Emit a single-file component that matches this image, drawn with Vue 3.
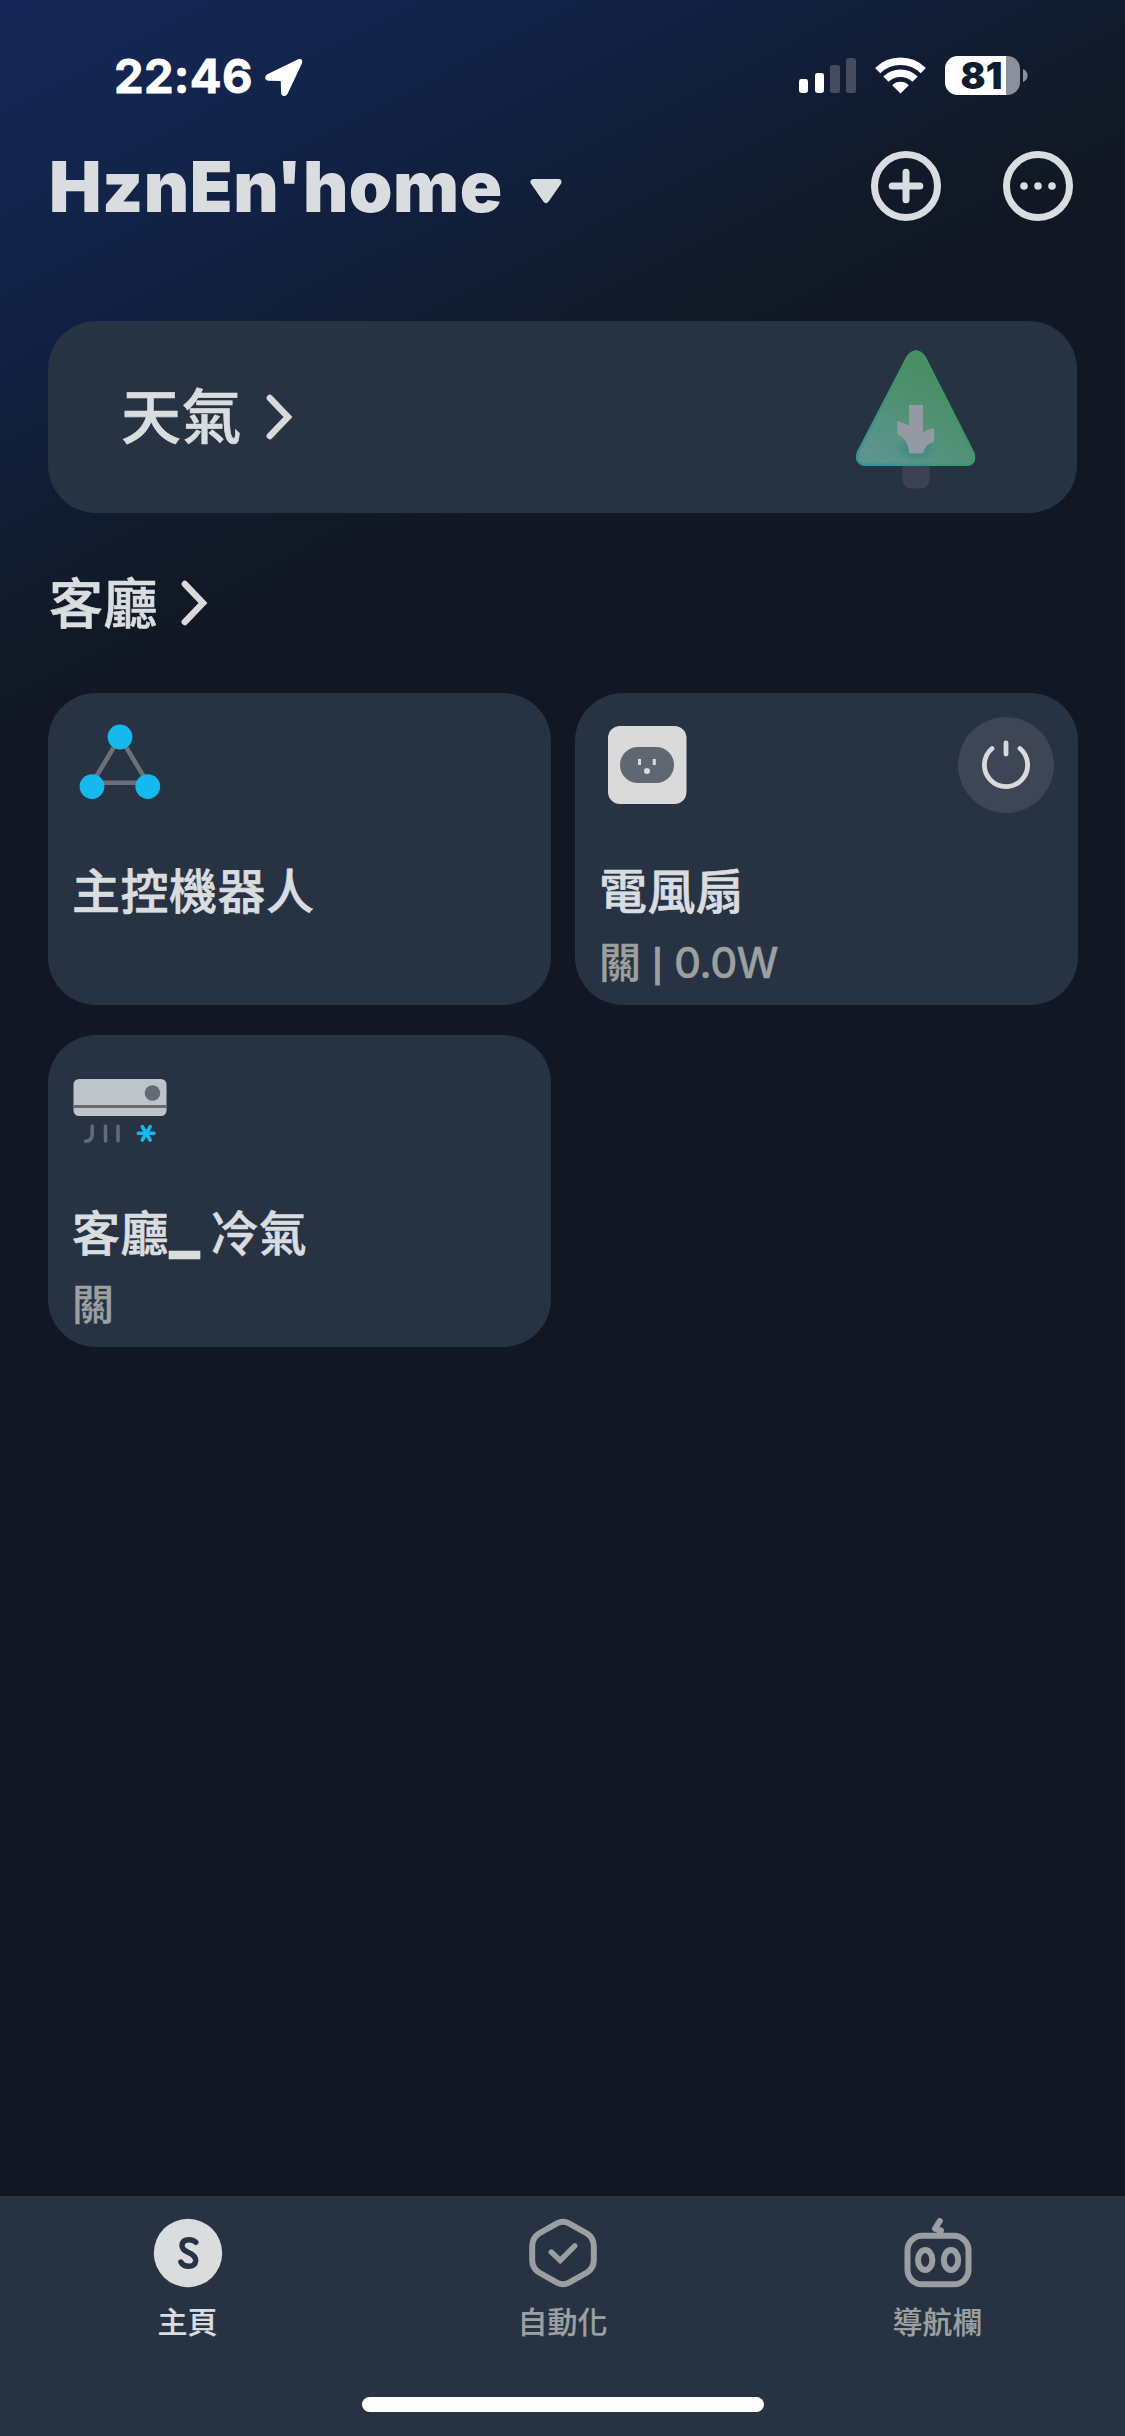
<script setup>
const devices = [
  { icon: 'hub', name: ['主控機器人'], status: '', reading: '', power: false },
  { icon: 'outlet', name: ['電風扇'], status: '關', reading: '0.0W', power: true },
  { icon: 'aircon', name: ['客廳', '_', ' 冷氣'], status: '關', reading: '', power: false },
]
const tabs = [
  { icon: 'home', label: '主頁', active: true },
  { icon: 'auto', label: '自動化', active: false },
  { icon: 'robot', label: '導航欄', active: false },
]
</script>

<template>
  <div class="screen">
    <div class="status-bar">
      <div class="clock">
        <span class="time">22:46</span>
        <svg class="location" width="40" height="40" viewBox="0 0 40 40">
          <path d="M3.3 17.2 L34.2 2.2 Q38.8 .8 38.2 5.8 L23.6 36.7 Q22 39.4 19.4 38.9 Q17 38.3 17 35.6 L16.8 24 L4.8 23.8 Q1.6 23.6 1.2 21 Q1 18.4 3.3 17.2 Z" fill="#fff" />
        </svg>
      </div>
      <div class="indicators">
        <svg width="57" height="36" viewBox="0 0 57 36">
          <rect x="0" y="21" width="9" height="14" rx="2.4" fill="#fff" />
          <rect x="16" y="15" width="9" height="20" rx="2.4" fill="#fff" />
          <rect x="31" y="7" width="10" height="28" rx="2.6" fill="#454c5e" />
          <rect x="47" y="0" width="10" height="35" rx="2.6" fill="#454c5e" />
        </svg>
        <svg class="wifi" width="51" height="37" viewBox="0 0 51 37">
          <g fill="none" stroke="#fff" stroke-width="7.4">
            <path d="M2.7 13.6 A32.5 32.5 0 0 1 48.3 13.6" />
            <path d="M10.9 22.2 A20.8 20.8 0 0 1 40.1 22.2" />
          </g>
          <path d="M25.5 36.5 L17.2 28.2 A11.8 11.8 0 0 1 33.8 28.2 Z" fill="#fff" />
        </svg>
        <div class="battery"><span>81</span></div>
        <svg class="nub" width="5" height="13" viewBox="0 0 5 13"><path d="M0 0 Q4.6 2.2 4.6 6.5 T0 13 Z" fill="#8b909c" /></svg>
      </div>
    </div>

    <header class="header">
      <h1>HznEn'home</h1>
      <svg class="caret" width="34" height="26" viewBox="0 0 34 26"><path d="M4.5 4 H29.5 L17 22 Z" fill="#dadde0" stroke="#dadde0" stroke-width="6" stroke-linejoin="round" /></svg>
      <div class="actions">
        <svg width="70" height="70" viewBox="0 0 70 70" fill="none" stroke="#dadde0" stroke-width="7" stroke-linecap="round">
          <circle cx="35" cy="35" r="31.5" /><path d="M21.2 35 H48.8 M35 21.2 V48.8" />
        </svg>
        <svg width="70" height="70" viewBox="0 0 70 70" fill="#dadde0">
          <circle cx="35" cy="35" r="31.5" fill="none" stroke="#dadde0" stroke-width="7" />
          <circle cx="21" cy="35" r="3.8" /><circle cx="35" cy="35" r="3.8" /><circle cx="49" cy="35" r="3.8" />
        </svg>
      </div>
    </header>

    <section class="weather">
      <span class="weather-label">天氣</span>
      <svg class="chevron" width="27" height="46" viewBox="0 0 27 46"><path d="M3.8 4 L22 23 L3.8 42" /></svg>
      <svg class="tree" width="122" height="140" viewBox="0 0 122 140">
        <defs>
          <linearGradient id="leaf" x1=".15" y1=".9" x2=".6" y2=".2">
            <stop offset="0" stop-color="#5c948e" /><stop offset=".35" stop-color="#54937f" /><stop offset="1" stop-color="#4a8e64" />
          </linearGradient>
          <linearGradient id="leafEdge" x1=".1" y1=".9" x2=".7" y2=".4">
            <stop offset="0" stop-color="#3a9299" /><stop offset="1" stop-color="#42965f" />
          </linearGradient>
          <radialGradient id="shade"><stop offset="0" stop-color="#2e8089" stop-opacity=".8" /><stop offset="1" stop-color="#2e8089" stop-opacity="0" /></radialGradient>
        </defs>
        <path d="M47.500 100 H74.500 V129 Q74.500 138.500 65 138.500 H57 Q47.500 138.500 47.500 129 Z" fill="#3c4253" />
        <path d="M51.500 6.500 Q61 -6 70.500 6.500 L119 102 Q123.500 114.500 112 116 H10 Q-1.500 114.500 2 102 Z" fill="url(#leaf)" />
        <path d="M52.500 7.500 Q61 -4 69.500 7.500 L118 102.500 Q121.500 113.500 112 114.800 H10 Q.200 113.500 3 102.500 Z" fill="none" stroke="url(#leafEdge)" stroke-width="2.400" />
        <ellipse cx="60" cy="99" rx="22" ry="13" fill="url(#shade)" />
        <path d="M54 55 H68 V82.300 Q73.500 78.800 79.100 78 V92 Q70.500 93.500 68 103.500 H54 Q53 88 42.100 84.500 V71.300 Q48.500 72.300 54 75.800 Z" fill="#9499a4" />
      </svg>
    </section>

    <div class="room">
      <h2>客廳</h2>
      <svg class="chevron" width="27" height="46" viewBox="0 0 27 46"><path d="M3.8 4 L22 23 L3.8 42" /></svg>
    </div>

    <main class="grid">
      <article v-for="d in devices" :key="d.icon" class="card">
        <div class="card-top">
          <svg v-if="d.icon === 'hub'" width="96" height="96" viewBox="0 0 96 96">
            <path d="M48 20 L20.500 65.800 H75.500 Z" fill="none" stroke="#6b6f77" stroke-width="4.600" />
            <g fill="#15b9ee"><circle cx="48" cy="20" r="12.400" /><circle cx="20" cy="69.600" r="12.400" /><circle cx="75.800" cy="69.600" r="12.400" /></g>
          </svg>
          <svg v-else-if="d.icon === 'outlet'" width="96" height="96" viewBox="0 0 96 96">
            <rect x="9" y="9" width="78.500" height="78" rx="12" fill="#dadada" />
            <rect x="21" y="30" width="54" height="36" rx="18" fill="#606770" />
            <path d="M39 42 h3 v6 h-3z M53.800 42 h3 v6 h-3z" fill="#dadada" /><circle cx="48" cy="54" r="3" fill="#dadada" />
          </svg>
          <svg v-else width="96" height="96" viewBox="0 0 96 96">
            <rect x="1.500" y="20" width="93" height="37" rx="5.500" fill="#bfc4c9" />
            <path d="M1.500 47.500 H94.500" stroke="#656a74" stroke-width="3" />
            <circle cx="80.500" cy="34" r="7.800" fill="#656a74" />
            <g fill="none" stroke-linecap="round">
              <path d="M20.200 67 V75 Q20.200 82 13.500 82.200 M33.500 67 V82 M46 67 V82" stroke="#656a74" stroke-width="3.500" />
              <path d="M66.300 74.300 H82 M70.300 67.600 L78.200 81 M78.200 67.600 L70.300 81" stroke="#15b9ee" stroke-width="3.600" />
            </g>
          </svg>
          <button v-if="d.power" class="power" type="button" aria-label="power">
            <svg width="96" height="96" viewBox="0 0 96 96" fill="none" stroke="#dadada" stroke-width="4.800" stroke-linecap="round">
              <path d="M34 31.500 A21.600 21.600 0 1 0 62 31.500" /><path d="M48 26 V37" />
            </svg>
          </button>
        </div>
        <h3><span v-for="part in d.name" :key="part" :class="{ underscore: part === '_' }">{{ part }}</span></h3>
        <p>{{ d.status }}<template v-if="d.reading"><span class="divider">|</span><span class="reading">{{ d.reading }}</span></template></p>
      </article>
    </main>

    <nav class="tabbar">
      <div class="tabs">
        <div v-for="t in tabs" :key="t.icon" class="tab" :class="{ active: t.active }">
          <svg v-if="t.icon === 'home'" width="72" height="72" viewBox="0 0 72 72">
            <circle cx="36" cy="36" r="34.200" fill="#dadcde" />
            <path d="M43.800 25.300 Q41.500 22.700 37 22.700 Q30.300 22.700 30 28.500 Q30 32.500 35.500 35 Q44 38.500 43.700 44 Q43 49.300 36.500 49.300 Q31 49.300 28.900 45" fill="none" stroke="#273242" stroke-width="5.400" stroke-linecap="round" />
          </svg>
          <svg v-else-if="t.icon === 'auto'" width="72" height="72" viewBox="0 0 72 72" fill="none" stroke="#9c9fa1" stroke-linecap="round" stroke-linejoin="round">
            <path d="M30.500 6.200 Q36 3.300 41.500 6.200 L60 16.500 Q66.800 21 66.800 29 V43 Q66.800 51 60 55.500 L41.500 65.800 Q36 68.700 30.500 65.800 L12 55.500 Q5.200 51 5.200 43 V29 Q5.200 21 12 16.500 Z" stroke-width="6" />
            <path d="M24.300 35 L33.200 43.500 L47.800 28.800" stroke-width="5.400" stroke-linejoin="miter" />
          </svg>
          <svg v-else width="72" height="72" viewBox="0 0 72 72" fill="none" stroke="#9c9fa1" stroke-width="6" stroke-linecap="round">
            <rect x="5.500" y="18.800" width="61" height="48.500" rx="14.500" />
            <ellipse cx="23.200" cy="43" rx="7.200" ry="10" /><ellipse cx="49" cy="43" rx="7.200" ry="10" />
            <path d="M37.800 4 L33 11.600 L39 13.600 L37.500 17" stroke-width="6" stroke-linejoin="round" />
          </svg>
          <span>{{ t.label }}</span>
        </div>
      </div>
      <div class="home-indicator"></div>
    </nav>
  </div>
</template>

<style>
body { background: #111823; }
</style>

<style scoped>
.screen {
  box-sizing: border-box;
  width: 1125px;
  height: 2436px;
  display: flex;
  flex-direction: column;
  overflow: hidden;
  color: #dadde0;
  font-family: Inter, "Noto Sans CJK TC", sans-serif;
  background: linear-gradient(153deg, #152657 0, #13244b 210px, #112040 340px, #111d34 460px, #111a29 560px, #111823 680px);
}
h1, h2, h3, p { margin: 0; }
svg { display: block; flex: none; }
.status-bar {
  box-sizing: border-box;
  height: 132px;
  padding: 56px 97px 0 114px;
  display: flex;
  justify-content: space-between;
  align-items: flex-start;
  color: #fff;
}
.clock { display: flex; }
.time { width: 150px; line-height: 39px; font-size: 47px; font-weight: 700; letter-spacing: .3px; white-space: nowrap; -webkit-text-stroke: .8px currentColor; }
.location { margin-top: 1px; }
.indicators { display: flex; align-items: flex-start; }
.indicators > svg:first-child { margin-top: 2px; }
.wifi { margin: 1px 19px 0; }
.battery {
  width: 74.500px;
  height: 39px;
  border-radius: 12.500px;
  background: linear-gradient(90deg, #fff 61px, #8b909c 61px);
  color: #101c30;
  font-size: 37px;
  font-weight: 900;
  line-height: 39px;
}
.battery span { display: block; width: 73px; text-align: center; }
.nub { margin: 13px 0 0 3.500px; }
.header { height: 108px; padding: 0 52px 0 49px; display: flex; align-items: center; }
h1 { width: 480px; margin-top: 2px; font-size: 70px; line-height: 82px; font-weight: 900; letter-spacing: .5px; white-space: nowrap; }
.caret { margin-top: 9px; }
.actions { margin-left: auto; display: flex; gap: 62px; }
.weather {
  box-sizing: border-box;
  height: 192px;
  margin: 81px 48px 0;
  padding: 0 100px 0 73px;
  display: flex;
  align-items: center;
  border-radius: 48px;
  background: #273242;
}
.weather-label { width: 145px; margin-bottom: 9px; font-size: 60px; font-weight: 500; letter-spacing: .4px; -webkit-text-stroke: .6px currentColor; }
.chevron path { fill: none; stroke: #dadada; stroke-width: 6.400; stroke-linecap: round; stroke-linejoin: miter; }
.tree { margin-left: auto; margin-top: 6px; }
.room { height: 180px; padding-left: 49px; display: flex; align-items: center; }
h2 { width: 132px; margin-top: 3px; font-size: 54px; line-height: 70px; font-weight: 500; letter-spacing: .6px; -webkit-text-stroke: .6px currentColor; }
.grid { display: grid; grid-template-columns: 503px 503px; grid-auto-rows: 312px; gap: 30px 24px; padding: 0 48px; }
.card { box-sizing: border-box; padding: 24px; border-radius: 48px; background: #273242; }
.card-top { display: flex; justify-content: space-between; height: 96px; }
.power { width: 96px; height: 96px; border: 0; padding: 0; border-radius: 50%; background: #3e4655; }
h3 { height: 62px; margin-top: 48px; font-size: 48px; line-height: 62px; font-weight: 500; letter-spacing: .5px; white-space: pre; -webkit-text-stroke: .6px currentColor; }
.underscore { font-size: 64px; font-weight: 800; line-height: 0; letter-spacing: -3px; }
p { height: 50px; margin-top: 15px; font-size: 42px; line-height: 50px; font-weight: 500; color: #9ca0a1; white-space: nowrap; -webkit-text-stroke: .3px currentColor; }
.divider { display: inline-block; width: 33px; text-align: center; font-size: 32px; line-height: 0; font-weight: 700; }
.reading { letter-spacing: -.7px; }
.tabbar { height: 240px; margin-top: auto; background: #273242; display: flex; flex-direction: column; align-items: center; }
.tabs { width: 100%; height: 201px; padding-top: 21px; box-sizing: border-box; display: grid; grid-template-columns: repeat(3, 1fr); }
.tab { display: flex; flex-direction: column; align-items: center; color: #9ca0a1; font-size: 30px; line-height: 40px; font-weight: 500; }
.tab span { margin-top: 13px; -webkit-text-stroke: .2px currentColor; }
.tab.active { color: #dadde0; }
.home-indicator { width: 402px; height: 15px; border-radius: 8px; background: #fff; }
</style>
